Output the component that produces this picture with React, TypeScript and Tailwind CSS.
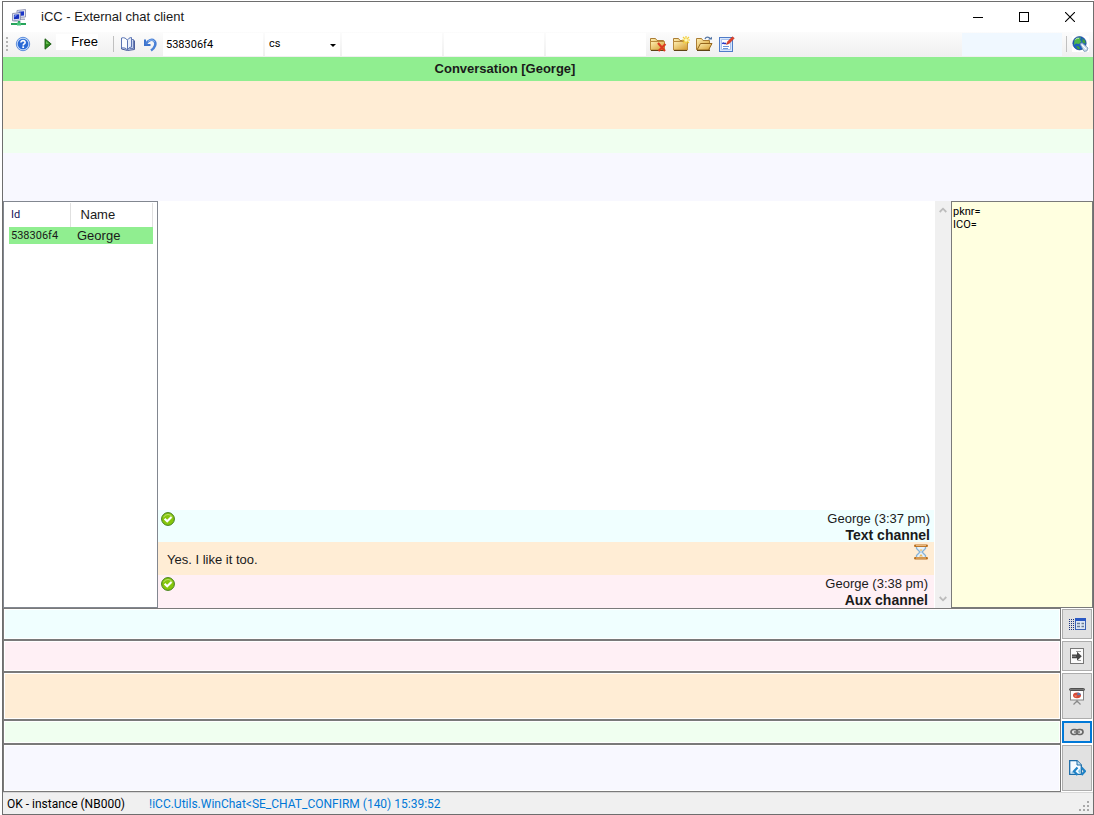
import React, { useState } from "react";

const HelpIcon = () => (
  <svg width="16" height="16" viewBox="0 0 16 16">
    <circle cx="8" cy="8" r="6.7" fill="#c5daf8" stroke="#5f8fdd" />
    <circle cx="8" cy="8" r="5.3" fill="#2a6ad6" />
    <path d="M5.9 6.6C5.9 3.9 10.4 4 10.1 6.6C10 8 8.2 8 8.2 9.4" fill="none" stroke="#fff" strokeWidth="1.6" />
    <rect x="7.3" y="10.3" width="1.8" height="1.7" fill="#fff" />
  </svg>
);

const PlayIcon = () => (
  <svg width="8" height="12" viewBox="0 0 8 12">
    <path d="M1 .8L7.2 6L1 11.2Z" fill="#2f8a1f" stroke="#1c5c14" strokeWidth=".9" />
    <path d="M2 3L5 6H2Z" fill="#6cc257" />
  </svg>
);

const BookIcon = () => (
  <svg width="16" height="16" viewBox="0 0 16 16">
    <path d="M1.5 3V13L7.5 14.5L14.5 13.5V4.5" fill="#c7d3ee" stroke="#4c5f9c" />
    <path d="M1.5 2C4 1 6.5 2.5 7.5 4.5V14C6 12 4 11.5 1.5 12Z" fill="#fafcff" stroke="#5a74b4" />
    <path d="M7.5 4.5C8 2.5 9.5 1.7 11.5 1.5V11C9.5 11.3 8.2 12.3 7.5 14Z" fill="#e9effb" stroke="#5a74b4" />
    <path d="M11.5 3.5H13.5V12.5H9.5" fill="none" stroke="#6b7fb8" />
  </svg>
);

const UndoIcon = () => (
  <svg width="15" height="15" viewBox="0 0 15 15">
    <path d="M2 2.5V8H7.5" fill="none" stroke="#3d73cc" strokeWidth="2" />
    <path d="M2.8 7C5.5 2.8 9 1.8 11.2 3.8C13.8 6.4 12 10.8 8 13.5" fill="none" stroke="#4a80d6" strokeWidth="2.5" />
    <path d="M5 4.5C7.5 2.4 10.5 2.6 11.6 5" fill="none" stroke="#9cc2f3" strokeWidth=".9" />
  </svg>
);

const Folder = ({ open = false, children }: { open?: boolean; children?: React.ReactNode }) => (
  <svg width="17" height="16" viewBox="0 0 17 16">
    <defs>
      <linearGradient id="folder" x1="0" y1="0" x2="1" y2="1">
        <stop offset="0" stopColor="#fff0b4" />
        <stop offset="1" stopColor="#d39a2b" />
      </linearGradient>
    </defs>
    <path d="M.5 13.5V2.5H5.5L7 4.5H13.5V13.5Z" fill="url(#folder)" stroke="#ab7d35" />
    {open ? (
      <path d="M1 14L4.5 7.5H16L12.5 14Z" fill="url(#folder)" stroke="#94651c" />
    ) : (
      <path d="M.5 5.5H14.5V14H.5Z" fill="url(#folder)" stroke="#b98a3c" />
    )}
    <path d="M1 14.5H14" stroke="#5e4416" />
    {children}
  </svg>
);

const FormIcon = () => (
  <svg width="16" height="16" viewBox="0 0 16 16">
    <rect x=".5" y="1.5" width="13" height="14" fill="#d8e6fc" stroke="#4f7cc8" />
    <path d="M2.5 3.5H11.5V13.5H2.5Z" fill="#fff" stroke="#a9c3ee" />
    <path d="M4 10.5H10M4 12.5H9" stroke="#6a94da" />
    <path d="M3.5 8C4.5 5.5 5.5 9 7 7" fill="none" stroke="#2434c4" strokeWidth="1.5" />
    <path d="M7.5 8.5L8.5 5.7L13.5.7L15.3 2.3L10.2 7.4Z" fill="#e2402a" stroke="#a82a1c" strokeWidth=".5" />
  </svg>
);

const GlobeIcon = () => (
  <svg width="17" height="16" viewBox="0 0 17 16">
    <rect width="17" height="16" fill="#fff" />
    <circle cx="7.5" cy="7.2" r="6.7" fill="#1c5fbe" stroke="#123f84" strokeWidth=".6" />
    <path d="M2.5 4C4 1.6 7 1 9 1.6L8 4L9.5 5.5L7 8L4 7.5L2 9Z" fill="#52b848" />
    <path d="M10 2.5L13 4.5L13.7 7.5L10.7 7Z" fill="#3f9e3c" />
    <path d="M4 10L7 10.5L8 13L6 13.2Z" fill="#3f9e3c" />
    <path d="M3.5 3.5C5 2 6 2 7 2.5" fill="none" stroke="#d5f3cd" />
    <path d="M8 8L10 6.8L16 12L14.8 15L12 15.3Z" fill="#d3e2ef" stroke="#6f8fae" strokeWidth=".8" />
    <path d="M10 9L14 13" stroke="#fff" />
  </svg>
);

const AppIcon = () => (
  <svg width="16" height="17" viewBox="0 0 16 17">
    <path d="M6 1.5L14.5.5V8L6 8.6Z" fill="#e4e7f2" stroke="#8087a8" strokeWidth=".8" />
    <path d="M7.5 2.8L13 2.2V6.6L7.5 7Z" fill="#1b36c8" />
    <path d="M9 9.5H14V11H9Z" fill="#a9afc4" />
    <path d="M1.5 4.5L9.5 3.7V11L1.5 11.8Z" fill="#e4e7f2" stroke="#8087a8" strokeWidth=".8" />
    <path d="M2.9 5.8L8.2 5.3V9.7L2.9 10.2Z" fill="#1730bd" />
    <path d="M3.5 6.3L6 6L3.5 8.5Z" fill="#7f9cf5" />
    <path d="M2.5 12.3H10" stroke="#b7bccf" />
    <path d="M0 15H15M8 12V15" stroke="#27a45b" strokeWidth="2" />
    <rect x="6" y="13.5" width="4" height="3" fill="#48c47b" />
  </svg>
);

const CheckIcon = () => (
  <svg width="14" height="14" viewBox="0 0 14 14" className="shrink-0">
    <circle cx="7" cy="7" r="6.4" fill="#86c60c" stroke="#437f1c" />
    <path d="M2.5 5.3A5 5 0 0 1 11.5 5.3" fill="none" stroke="#b9e26a" />
    <path d="M3.6 6.8L6.2 9.3L10.5 5" fill="none" stroke="#fff" strokeWidth="2.1" />
  </svg>
);

const HourglassIcon = () => (
  <svg width="14" height="16" viewBox="0 0 14 16" className="shrink-0">
    <path d="M2.5 2V4.5L6 8L2.5 11.5V14H11.5V11.5L8 8L11.5 4.5V2Z" fill="#e6f2fb" stroke="#86b2d6" strokeWidth="1.3" />
    <path d="M5.5 5.5H8.5L7 7.2ZM5 12.5L7 10L9 12.5Z" fill="#eab95c" />
    <path d="M1.2 1.8H12.8M1.2 14.2H12.8" stroke="#b9701f" strokeWidth="2.4" strokeLinecap="round" />
    <path d="M2 1.6H12M2 14H12" stroke="#f0c084" />
  </svg>
);

const TemplateIcon = () => (
  <svg width="17" height="12" viewBox="0 0 17 12">
    <path d="M.5 1V12M2.5 1V12M4.5 1V12" stroke="#1c3480" strokeDasharray="1 1" />
    <rect x="6.5" y=".5" width="10" height="11" fill="#dfe8f5" stroke="#3c62b4" />
    <rect x="6" y="0" width="11" height="3" fill="#2a58c4" />
    <path d="M8 5.5H11M8 8.5H11M12.5 5.5H15M12.5 8.5H15" stroke="#6c7c96" strokeWidth="1.6" />
  </svg>
);

const SendIcon = () => (
  <svg width="14" height="16" viewBox="0 0 14 16">
    <rect x=".5" y=".5" width="13" height="15" fill="#fbfbfb" stroke="#777" />
    <path d="M6 3.5H11M8 12.5H11" stroke="#999" />
    <path d="M2 6.5H7V3.8L11.8 8.3L7 12.8V10.2H2Z" fill="#454545" />
    <path d="M2 8.3H6" stroke="#8a8a8a" />
  </svg>
);

const BoardIcon = () => (
  <svg width="16" height="17" viewBox="0 0 16 17">
    <path d="M8 12V14.5M8 13L4.5 16.5M8 13L11.5 16.5" stroke="#8a8a8a" strokeWidth="1.2" />
    <rect x="1.5" y="2.5" width="13" height="9.5" fill="#fff" stroke="#858585" />
    <rect x=".5" y=".5" width="15" height="2" rx="1" fill="#777" stroke="#505050" />
    <ellipse cx="8" cy="7.3" rx="4" ry="2.9" fill="#d64a35" />
    <path d="M8 7.3L8.6 4.4A4 2.9 0 0 1 12 7Z" fill="#5c78ac" />
    <path d="M5 7.5L8 7.3L7 9.5Z" fill="#eb8773" />
  </svg>
);

const LinkIcon = () => (
  <svg width="14" height="8" viewBox="0 0 14 8">
    <rect x="1" y="1.5" width="6.5" height="5" rx="2.5" fill="none" stroke="#666" strokeWidth="1.7" />
    <rect x="6.5" y="1.5" width="6.5" height="5" rx="2.5" fill="none" stroke="#666" strokeWidth="1.7" />
    <path d="M4 4H10" stroke="#777" strokeWidth="1.5" />
  </svg>
);

const PageCodeIcon = () => (
  <svg width="17" height="16" viewBox="0 0 17 16">
    <path d="M.7.7H8L12.3 5V14.3H.7Z" fill="#f5fbff" stroke="#1c6ca8" strokeWidth="1.3" />
    <path d="M8 .7V5H12.3" fill="#c6e2f3" stroke="#1c6ca8" />
    <path d="M2.5 12.5H6" stroke="#8fc3e4" strokeWidth="2" />
    <path d="M8.5 7.5L5 11.2L8.5 15M12.5 7.5L16 11.2L12.5 15" fill="none" stroke="#1f82c6" strokeWidth="2.2" />
    <path d="M10.5 9L12 11.2L10.5 13.5L9 11.2Z" fill="#7ac4ea" />
  </svg>
);

const channels = [
  { name: "Text channel", box: "h-8", color: "bg-[#f0ffff]", icon: <TemplateIcon />, action: "Templates", focus: false },
  { name: "Aux channel", box: "h-8", color: "bg-[#fff0f5]", icon: <SendIcon />, action: "Send", focus: false },
  { name: "Presentation", box: "h-12", color: "bg-[#ffedd5]", icon: <BoardIcon />, action: "Present", focus: false },
  { name: "Link", box: "h-6", color: "bg-[#f0fff0]", icon: <LinkIcon />, action: "Send link", focus: true },
  { name: "Page code", box: "h-12", color: "bg-[#f8f8ff]", icon: <PageCodeIcon />, action: "Send page", focus: false },
];

const Header = ({ time, channel, className }: { time: string; channel: string; className: string }) => (
  <div className={`flex items-start justify-between pl-[3px] pt-px ${className}`}>
    <div className="pt-px">
      <CheckIcon />
    </div>
    <div className="text-right leading-4">
      <p>George ({time})</p>
      <p className="text-[14px] font-bold leading-4">{channel}</p>
    </div>
  </div>
);

const small = "font-[Roboto,'Noto_Sans',sans-serif] text-[11px]";

export default function App() {
  const [session, setSession] = useState("538306f4");
  const [notes, setNotes] = useState("pknr=\nICO=");

  return (
    <div className="h-screen bg-white pl-0.5 pt-px font-['Liberation_Sans',Arial,sans-serif] text-[13px] text-[#1a1a1a]">
      <div className="flex h-full flex-col border border-[#6e6e6e] bg-white">
        {/* Title bar */}
        <header className="flex h-[30px] shrink-0 items-center justify-between pl-2">
          <div className="flex items-center gap-3.5">
            <AppIcon />
            <h1 className="text-[13px]">iCC - External chat client</h1>
          </div>
          <div className="flex h-full text-black">
            <button aria-label="Minimize" className="flex w-[46px] items-center justify-center">
              <svg width="10" height="10"><path d="M0 5.5H10" stroke="currentColor" /></svg>
            </button>
            <button aria-label="Maximize" className="flex w-[46px] items-center justify-center">
              <svg width="10" height="10"><rect x=".5" y=".5" width="9" height="9" fill="none" stroke="currentColor" /></svg>
            </button>
            <button aria-label="Close" className="flex w-[46px] items-center justify-center">
              <svg width="10" height="10"><path d="M0 0L10 10M10 0L0 10" stroke="currentColor" strokeWidth="1.1" /></svg>
            </button>
          </div>
        </header>

        {/* Toolbar */}
        <div className={`flex h-[25px] shrink-0 items-center bg-linear-to-b from-[#fcfcfc] to-[#efefef] pb-px text-black ${small}`}>
          <svg width="2" height="14" className="ml-[3px] mr-[7px]"><path d="M1 0V14" stroke="#b4b4b4" strokeWidth="2" strokeDasharray="2 2" /></svg>
          <button aria-label="Help" className="mr-[13px]"><HelpIcon /></button>
          <button aria-label="Start" className="mr-1"><PlayIcon /></button>
          <span className="mr-[15px] mb-1 w-[42px] bg-white text-right font-['Liberation_Sans',Arial,sans-serif] text-[13px] leading-4">Free</span>
          <span className="mr-1.5 h-4 w-px bg-[#c0c0c0]" />
          <button aria-label="Address book" className="mr-[7px]"><BookIcon /></button>
          <button aria-label="Undo" className="mr-[5px]"><UndoIcon /></button>
          <input aria-label="Session" value={session} onChange={(e) => setSession(e.target.value)} className="h-[23px] w-[100px] bg-white px-[3px] outline-none" />
          <div className="relative ml-0.5 h-[23px] w-[75px] bg-white">
            <select aria-label="Language" className="size-full appearance-none bg-transparent pl-1 outline-none">
              <option>cs</option>
              <option>en</option>
            </select>
            <svg width="6" height="3" className="pointer-events-none absolute right-1 top-[11px]"><path d="M0 0H6L3 3Z" fill="#000" /></svg>
          </div>
          <input aria-label="Field 1" className="ml-0.5 h-[23px] w-[100px] bg-white outline-none" />
          <input aria-label="Field 2" className="ml-0.5 h-[23px] w-[100px] bg-white outline-none" />
          <input aria-label="Field 3" className="ml-0.5 h-[23px] w-[100px] bg-white outline-none" />
          <div className="ml-1 flex gap-1.5">
            <button aria-label="Close folder">
              <Folder><path d="M8 7L15 15M15.5 8L8.5 15" stroke="#dc3a20" strokeWidth="2.1" /></Folder>
            </button>
            <button aria-label="New folder">
              <Folder>
                <path d="M13 0V8M9 4H17M10 1L16 7M16 1L10 7" stroke="#f2cf38" strokeWidth="1.2" />
                <circle cx="13" cy="4" r="1.7" fill="#fff8bd" />
              </Folder>
            </button>
            <button aria-label="Open folder">
              <Folder open>
                <path d="M9 3C10 .5 13 .5 14.3 3" fill="none" stroke="#5577a5" strokeWidth="1.3" />
                <path d="M12 3.5H16V.8Z" fill="#5577a5" />
              </Folder>
            </button>
            <button aria-label="Edit form"><FormIcon /></button>
          </div>
          <input aria-label="Search" className="ml-auto h-[23px] w-[100px] bg-[#f0f8ff] outline-none" />
          <span className="ml-1 mr-[5px] h-4 w-px bg-[#c0c0c0]" />
          <button aria-label="Web" className="mr-1"><GlobeIcon /></button>
        </div>

        <h2 className="h-6 shrink-0 bg-[#90ee90] pr-[86px] text-center font-bold leading-6">Conversation [George]</h2>
        <div className="h-12 shrink-0 bg-[#ffedd5]" />
        <div className="h-6 shrink-0 bg-[#f0fff0]" />
        <div className="h-12 shrink-0 bg-[#f8f8ff]" />

        <main className="flex min-h-0 flex-1">
          <aside className="w-[155px] shrink-0 border border-[#828790] pl-[5px] pt-px">
            <table className="w-36 table-fixed border-collapse text-left">
              <thead>
                <tr className="h-6">
                  <th className={`w-[61px] border-r border-[#e0e0e0] p-0 pl-0.5 font-normal text-[#14145a] ${small}`}>Id</th>
                  <th className="border-r border-[#e0e0e0] p-0 pl-2.5 font-normal">Name</th>
                </tr>
              </thead>
              <tbody>
                <tr className="h-[17px] bg-[#90ee90] leading-4">
                  <td className={`p-0 pl-0.5 ${small}`}>538306f4</td>
                  <td className="p-0 pl-[7px]">George</td>
                </tr>
              </tbody>
            </table>
          </aside>

          <section className="flex min-w-0 flex-1 flex-col justify-end pr-px">
            <Header time="3:37 pm" channel="Text channel" className="h-8 bg-[#f0ffff] pr-1" />
            <div className="flex h-[33px] shrink-0 items-start justify-between bg-[#ffedd5] pl-[9px] pr-1.5 pt-0.5">
              <p className="pt-2 leading-4">Yes. I like it too.</p>
              <HourglassIcon />
            </div>
            <Header time="3:38 pm" channel="Aux channel" className="h-[33px] bg-[#fff0f5] pr-1.5" />
          </section>

          <div className="flex w-4 shrink-0 flex-col items-center justify-between bg-[#f0f0f0] py-1.5">
            <svg width="8" height="6"><path d="M.7 5L4 1.7L7.3 5" fill="none" stroke="#bcbcbc" strokeWidth="1.8" /></svg>
            <svg width="8" height="6"><path d="M.7 1L4 4.3L7.3 1" fill="none" stroke="#bcbcbc" strokeWidth="1.8" /></svg>
          </div>

          <textarea
            aria-label="Customer data"
            value={notes}
            onChange={(e) => setNotes(e.target.value)}
            className={`w-[142px] shrink-0 resize-none border border-[#7a7a7a] bg-[#ffffe0] px-px py-[3px] leading-[13px] text-black outline-none ${small}`}
          />
        </main>

        {/* Channel inputs */}
        <div className="shrink-0">
          {channels.map((c) => (
            <div key={c.name} className={`flex ${c.box}`}>
              <textarea
                aria-label={c.name}
                className={`block h-full min-w-0 flex-1 resize-none border border-[#7a7a7a] bg-clip-content p-px outline-none ${c.color}`}
              />
              <div className="p-px">
                <button
                  aria-label={c.action}
                  className={`flex h-full w-[30px] items-center justify-center bg-[#e1e1e1] ${c.focus ? "border-2 border-[#0078d7]" : "border border-[#adadad]"}`}
                >
                  {c.icon}
                </button>
              </div>
            </div>
          ))}
        </div>

        {/* Status bar */}
        <footer className="flex h-[22px] shrink-0 items-center gap-6 border-t border-[#d7d7d7] bg-[#f0f0f0] pl-1 font-[Roboto,'Noto_Sans',sans-serif] text-[12px] text-black">
          <span>OK - instance (NB000)</span>
          <span className="text-[#0078d7]">!iCC.Utils.WinChat&lt;SE_CHAT_CONFIRM (140) 15:39:52</span>
          <svg width="12" height="12" className="mb-px ml-auto mr-0.5 self-end" fill="#a8a8a8">
            <path d="M8 0h2v2h-2zM4 4h2v2h-2zM8 4h2v2h-2zM0 8h2v2h-2zM4 8h2v2h-2zM8 8h2v2h-2z" />
          </svg>
        </footer>
      </div>
    </div>
  );
}
